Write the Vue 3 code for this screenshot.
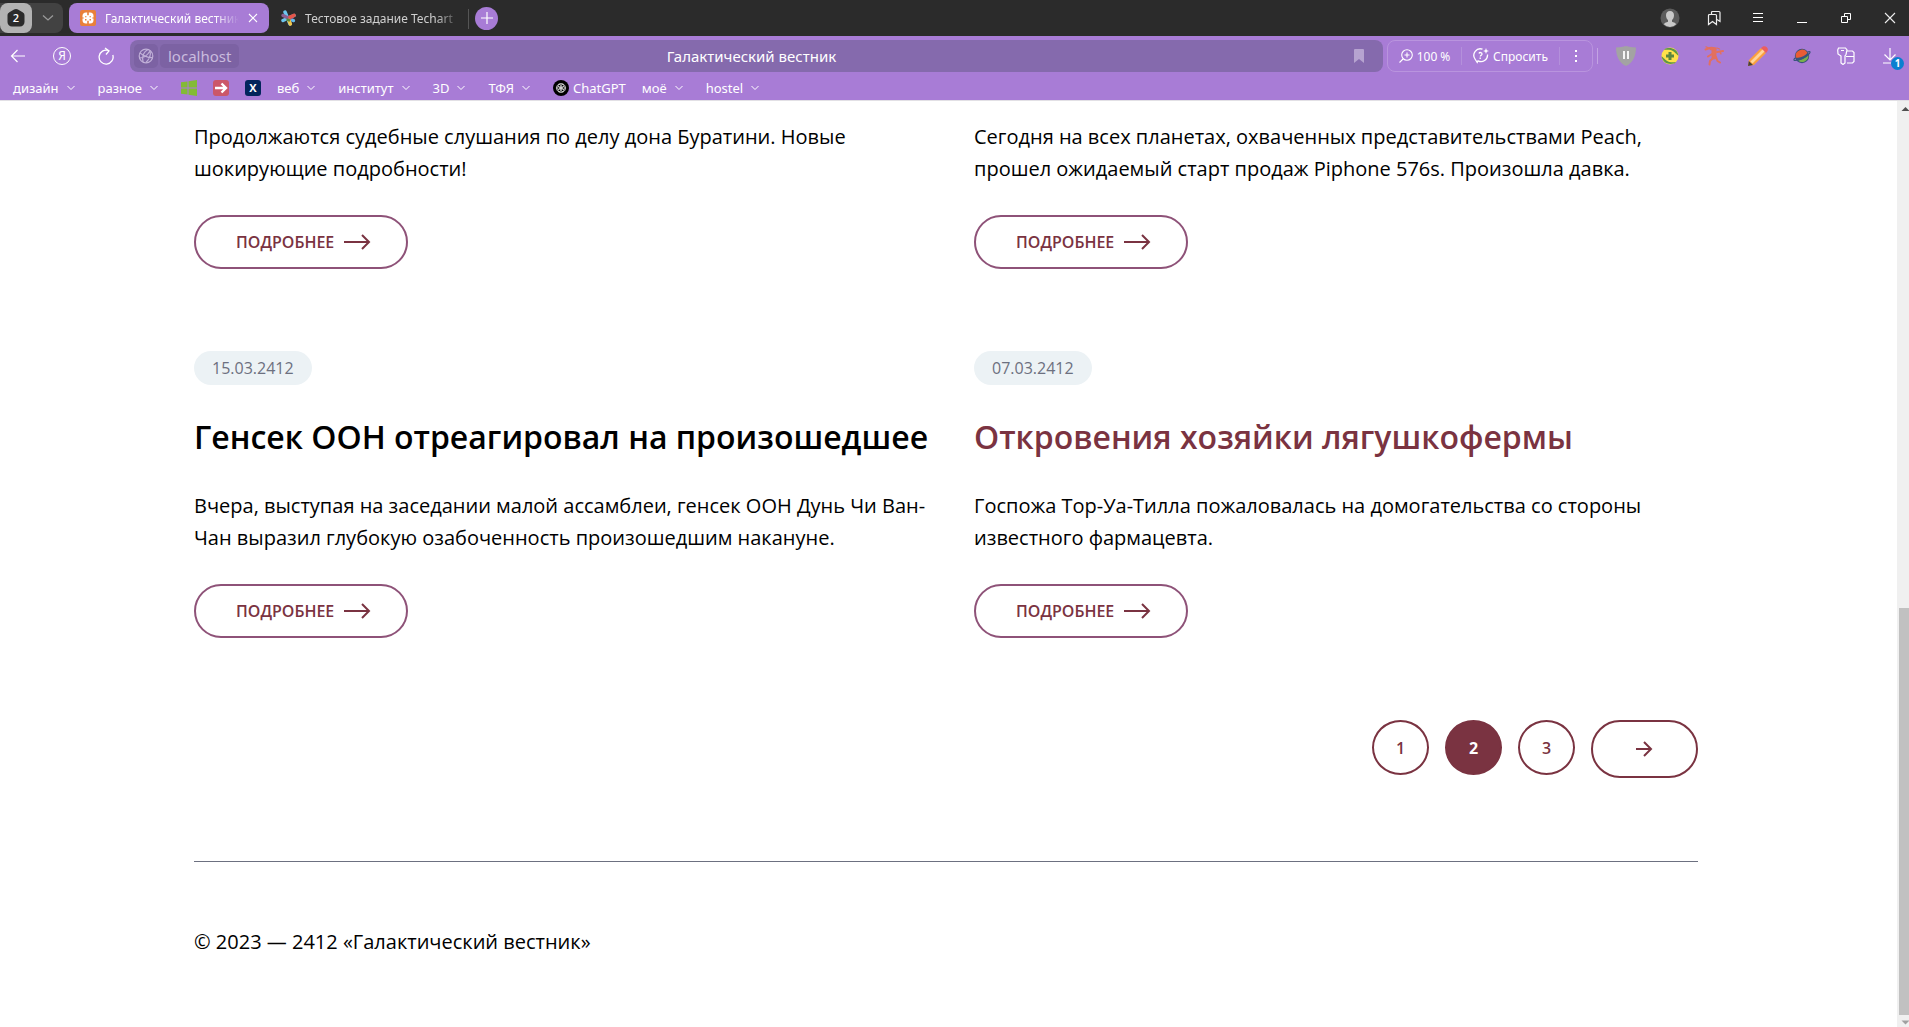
<script setup>
const bookmarks = [
  { label: 'дизайн', folder: true },
  { label: 'разное', folder: true },
  { icon: 'windows', name: 'Windows' },
  { icon: 'arrow', name: 'Переход' },
  { icon: 'x', name: 'X' },
  { label: 'веб', folder: true },
  { label: 'институт', folder: true },
  { label: '3D', folder: true },
  { label: 'ТФЯ', folder: true },
  { icon: 'gpt', label: 'ChatGPT' },
  { label: 'моё', folder: true },
  { label: 'hostel', folder: true },
]

const news = [
  { id: 1, text: 'Продолжаются судебные слушания по делу дона Буратини. Новые шокирующие подробности!' },
  { id: 2, text: 'Сегодня на всех планетах, охваченных представительствами Peach, прошел ожидаемый старт продаж Piphone 576s. Произошла давка.' },
  {
    id: 3,
    date: '15.03.2412',
    title: 'Генсек ООН отреагировал на произошедшее',
    text: 'Вчера, выступая на заседании малой ассамблеи, генсек ООН Дунь Чи Ван-Чан выразил глубокую озабоченность произошедшим накануне.',
  },
  {
    id: 4,
    date: '07.03.2412',
    title: 'Откровения хозяйки лягушкофермы',
    text: 'Госпожа Тор-Уа-Тилла пожаловалась на домогательства со стороны известного фармацевта.',
    active: true,
  },
]

const pages = [1, 2, 3]
const current = 2
</script>

<template>
  <div class="browser">
    <header class="chrome">
      <div class="tabbar">
        <div class="tab-group">
          <button class="tab-count" aria-label="Группа вкладок">
            <svg width="18" height="18" viewBox="0 0 18 18">
              <path d="M9 0c1 0 1.600.3 2.400.8l4.200 2.500C16.900 4.100 17.500 5 17.500 6.500V13a4.500 4.500 0 0 1-4.500 4.500H5A4.500 4.500 0 0 1 .5 13V6.500C.5 5 1.100 4.100 2.400 3.300L6.600.8C7.400.3 8 0 9 0z" fill="#2b2b2b" />
              <text x="9" y="13" text-anchor="middle" class="count-text">2</text>
            </svg>
          </button>
          <button class="tab-more" aria-label="Список вкладок">
            <svg width="12" height="8" viewBox="0 0 12 8"><path d="M1 1.500l5 4.500 5-4.500" fill="none" stroke="#999" stroke-width="1.300" /></svg>
          </button>
        </div>
        <div class="tab tab-active">
          <svg width="16" height="16" viewBox="0 0 16 16">
            <rect width="16" height="16" rx="2" fill="#e9803a" />
            <rect x="2.500" y="2.500" width="11" height="11" rx="3.500" fill="#fff" />
            <path d="M8 1.500v3.700M8 14.500v-3.700" stroke="#e9803a" stroke-width="1.600" />
            <path d="M5 6.300h1.500v.9H5zM9.500 6.300H11v.9H9.500zM5 9h1.500v1.600H5zM9.500 9H11v1.600H9.500z" fill="#e9803a" />
            <path d="M1.500 8h2.200M14.500 8h-2.200" stroke="#e9803a" stroke-width="1.200" />
          </svg>
          <span class="tab-title">Галактический вестник</span>
          <button class="tab-close" aria-label="Закрыть вкладку">
            <svg width="10" height="10" viewBox="0 0 10 10"><path d="M1 1l8 8M9 1l-8 8" stroke="#fff" stroke-width="1.100" /></svg>
          </button>
        </div>
        <div class="tab tab-idle">
          <svg width="16" height="16" viewBox="0 0 16 16">
            <path d="M5 2l5 12" stroke="#6cc5ef" stroke-width="3.500" stroke-linecap="round" />
            <path d="M14 5.500L3 10.500" stroke="#6cc5ef" stroke-width="3.500" stroke-linecap="round" />
            <path d="M3 5.500l10.500 5" stroke="#8a5f92" stroke-width="3.500" stroke-linecap="round" />
            <path d="M10 7.200l4-1.800" stroke="#e55549" stroke-width="3.500" stroke-linecap="round" />
            <path d="M9 10.500l1.300 3.500" stroke="#f2c64b" stroke-width="3.500" stroke-linecap="round" />
            <path d="M6.500 9.500l3.500 1" stroke="#59883f" stroke-width="2.500" />
            <path d="M12.500 10.300l1 .4" stroke="#5dbff0" stroke-width="3" stroke-linecap="round" />
          </svg>
          <span class="tab-title">Тестовое задание Techart</span>
        </div>
        <button class="tab-add" aria-label="Новая вкладка">
          <svg width="12" height="12" viewBox="0 0 12 12"><path d="M6 0v12M0 6h12" stroke="#fff" stroke-width="1.200" /></svg>
        </button>
        <div class="cells window-cells">
          <button aria-label="Профиль">
            <svg width="20" height="20" viewBox="0 0 20 20">
              <circle cx="10" cy="10" r="9.500" fill="#5c5c5c" />
              <path d="M10 3c2.600 0 4 1.700 4 4.200 0 2.200-.9 4-2 4.900v1.700c1.500.5 3.200 1 4.200 2.400A9 9 0 0 1 10 19a9 9 0 0 1-6.200-2.800C4.800 14.800 6.500 14.300 8 13.800v-1.700c-1.100-.9-2-2.700-2-4.900C6 4.700 7.400 3 10 3z" fill="#c9c9c9" />
            </svg>
          </button>
          <button aria-label="Закладки">
            <svg width="14" height="16" viewBox="0 0 14 16" fill="none" stroke="#eee" stroke-width="1.200">
              <path d="M1.500 5.500A1 1 0 0 1 2.500 4.500H8.500A1 1 0 0 1 9.500 5.500V14.500L5.500 11.500L1.500 14.500z" />
              <path d="M4.500 4V2.500A1 1 0 0 1 5.500 1.500H12A1 1 0 0 1 13 2.500V11.500L10 9.500" />
            </svg>
          </button>
          <button aria-label="Меню">
            <svg width="12" height="12" viewBox="0 0 12 12"><path d="M1 1.500h10M1 5.500h10M1 9.500h10" stroke="#fff" /></svg>
          </button>
          <button aria-label="Свернуть">
            <svg width="12" height="12" viewBox="0 0 12 12"><path d="M1 10.500h10" stroke="#fff" /></svg>
          </button>
          <button aria-label="Развернуть">
            <svg width="12" height="12" viewBox="0 0 12 12" fill="none" stroke="#fff"><path d="M1.500 4.500h6v6h-6zM4.500 4.500v-3h6v6h-3" /></svg>
          </button>
          <button aria-label="Закрыть">
            <svg width="12" height="12" viewBox="0 0 12 12"><path d="M1 1l10 10M11 1L1 11" stroke="#eee" stroke-width="1.100" /></svg>
          </button>
        </div>
      </div>

      <div class="toolbar">
        <div class="cells nav-cells">
          <button aria-label="Назад">
            <svg width="16" height="14" viewBox="0 0 16 14" fill="none" stroke="#fff" stroke-width="1.200"><path d="M15 7H1.500M7.500 1L1.500 7l6 6" /></svg>
          </button>
          <button aria-label="Яндекс"><span class="ya">Я</span></button>
          <button aria-label="Обновить">
            <svg width="16" height="18" viewBox="0 0 16 18" fill="none" stroke="#fff" stroke-width="1.300"><path d="M10.500 3.500A7 7 0 1 0 14.800 8M7 1l4 2.800L8 7.500" /></svg>
          </button>
        </div>
        <div class="address">
          <div class="address-left">
            <span class="site-chip">
              <svg width="16" height="16" viewBox="0 0 16 16" fill="none" stroke="#c1b0d8" stroke-width="1.200">
                <circle cx="8" cy="8" r="6.800" />
                <path d="M10 1.500C5 4 4 9 5 14M2 5c4 3 8 5 12.500 4.500M12 2.500c1 4-1 9-4 12M1.500 10C5 10 9 8 12 3" />
              </svg>
            </span>
            <span class="host-chip">localhost</span>
          </div>
          <span class="page-title">Галактический вестник</span>
          <button class="save" aria-label="Добавить в закладки">
            <svg width="10" height="14" viewBox="0 0 10 14"><path d="M0 1a1 1 0 0 1 1-1h8a1 1 0 0 1 1 1v13L5 10 0 14z" fill="#b6a3d0" /></svg>
          </button>
        </div>
        <div class="tools">
          <button class="tool-zoom">
            <svg width="14" height="14" viewBox="0 0 14 14" fill="none" stroke="#fff" stroke-width="1.100"><circle cx="8" cy="6" r="5.300" /><path d="M4 10L.5 13.500M8 3.500v5M5.500 6h5" /></svg>
            100 %
          </button>
          <button class="tool-ask">
            <svg width="16" height="16" viewBox="0 0 16 16" fill="none" stroke="#fff" stroke-width="1.300">
              <path d="M9.500 1.200A6.500 6.500 0 0 0 2 11L4.200 14.500 5 12.800A6.500 6.500 0 0 0 14.500 6.500" />
              <path d="M6 5.500C6.500 4 9.300 4.200 9 6.200 8.800 7.300 7.500 7.300 7.300 8.500M7.200 9.600v1.300" />
              <path d="M13 0l.8 2.200L16 3l-2.200.8L13 6l-.8-2.200L10 3l2.200-.8z" fill="#fff" stroke="none" />
            </svg>
            Спросить
          </button>
          <button class="tool-dots" aria-label="Ещё">
            <svg width="4" height="14" viewBox="0 0 4 14" fill="#fff"><path d="M1 1h2v2H1zM1 6h2v2H1zM1 11h2v2H1z" /></svg>
          </button>
        </div>
        <span class="split"></span>
        <div class="cells ext-cells">
          <button aria-label="Защита">
            <svg width="20" height="20" viewBox="0 0 20 20"><path d="M0 1.500C4 1.500 7 .5 10 0c3 .5 6 1.500 10 1.500C20 10 17 17 10 20 3 17 0 10 0 1.500z" fill="#a3a3a3" /><path d="M8 5v8M12 5v8" stroke="#fff" stroke-width="1.800" /></svg>
          </button>
          <button aria-label="Расширение">
            <svg width="20" height="20" viewBox="0 0 20 20">
              <circle cx="10" cy="10" r="8.500" fill="#ffe14a" />
              <path d="M4 3.500C9 .5 17 2 18.500 9.500 16.500 9 14.500 5 10.500 4 8 3.400 6 4 4 3.500z" fill="#5e9648" />
              <path d="M16 16.500C11 19.500 3 18 1.500 10.500 3.500 11 5.500 15 9.500 16c2.500.6 4.500 0 6.500.5z" fill="#5e9648" />
              <path d="M10 6v8M6 10h8" stroke="#5b8740" stroke-width="3" />
            </svg>
          </button>
          <button aria-label="Фигурка">
            <svg width="20" height="20" viewBox="0 0 20 20" fill="none" stroke="#e3705e" stroke-linecap="round" stroke-linejoin="round">
              <path d="M10 5v6" stroke-width="5" />
              <path d="M7 2.500l4 .5" stroke-width="3.500" />
              <path d="M6 2L1.500 3.500M13 6l3-.5 3-.5M8 8l-4 2.500M9 12l-3 3-.5 3.500M12 11l1.500 4 2.500 1.500" stroke-width="2" />
              <path d="M2 .8L5 2M16 5.500l1 2.500M13 2l2.500 1" stroke-width="1.300" />
            </svg>
          </button>
          <button aria-label="Карандаш">
            <svg width="20" height="20" viewBox="0 0 20 20"><path d="M0 20l1-6L13 2l5 5L6 19z" fill="#fa9f3e" /><path d="M2.500 15.500L15 3l2 2L4.500 17.500z" fill="#ffd49a" /><path d="M13 2l2-1.500c3-1 6 2 4.500 4.500L18 7z" fill="#ec5e60" /><path d="M0 20l.8-5L5 19z" fill="#45413c" /></svg>
          </button>
          <button aria-label="Планета">
            <svg width="18" height="16" viewBox="0 0 18 16">
              <circle cx="9" cy="8" r="7.200" fill="#37547b" />
              <path d="M2.800 9.500A6.400 6.400 0 0 1 14.500 4.800C12 8 7 10.500 2.800 9.500z" fill="#e85c35" />
              <path d="M5 12.500C9 12 13 9.500 15.400 7A6.400 6.400 0 0 1 5 12.500z" fill="#78b14a" />
              <path d="M14.500 4C17.500 3 18 4 15.500 6.500 12 10 6 12.500 2.500 12.500.5 12.500.5 11.500 2 10" fill="none" stroke="#37547b" stroke-width="1.200" />
            </svg>
          </button>
          <button aria-label="Пароли">
            <svg width="18" height="18" viewBox="0 0 18 18" fill="none" stroke="#fff" stroke-width="1.200"><path d="M1.500 1h7L10 3 9 7.500 8 9v7L6 17.500 4 16V9L1 7 .7 3zM4 3.500h3M10 4h5.500L17 5.500v9L15.500 16H10M9 9.500h8" /></svg>
          </button>
          <button class="download" aria-label="Загрузки">
            <svg width="14" height="16" viewBox="0 0 14 16" fill="none" stroke="#fff" stroke-width="1.200"><path d="M7 0v12M1.500 6.500L7 12l5.500-5.500M0 15h8" /></svg>
            <span class="badge">1</span>
          </button>
        </div>
      </div>

      <nav class="bookmarks" aria-label="Панель закладок">
        <a v-for="(b, i) in bookmarks" :key="i" href="#" :class="{ folder: b.folder }" :aria-label="b.name">
          <svg v-if="b.icon === 'windows'" width="16" height="16" viewBox="0 0 16 16"><path d="M0 2.200L6.500 1.400V7.500H0zM7.500 1.200L16 0V7.500H7.500zM0 8.500h6.500v6.100L0 13.800zM7.500 8.500H16V16l-8.500-1.200z" fill="#83bb35" /></svg>
          <svg v-else-if="b.icon === 'arrow'" width="16" height="16" viewBox="0 0 16 16"><rect width="16" height="16" rx="3" fill="#cb5769" /><path d="M2 8h10M8.500 3.500L13 8l-4.500 4.500" fill="none" stroke="#fff" stroke-width="2.400" /></svg>
          <svg v-else-if="b.icon === 'x'" width="16" height="16" viewBox="0 0 16 16"><rect width="16" height="16" rx="3" fill="#03255b" /><text x="8" y="12" text-anchor="middle" class="x-text">X</text></svg>
          <svg v-else-if="b.icon === 'gpt'" width="16" height="16" viewBox="0 0 16 16">
            <circle cx="8" cy="8" r="8" fill="#000" />
            <g fill="none" stroke="#ddd" stroke-width=".8">
              <ellipse v-for="a in [0, 60, 120, 180, 240, 300]" :key="a" cx="8" cy="5.500" rx="2.700" ry="2" :transform="`rotate(${a} 8 8)`" />
            </g>
          </svg>
          <span v-if="b.label">{{ b.label }}</span>
          <svg v-if="b.folder" class="chev" width="8" height="6" viewBox="0 0 8 6"><path d="M.5 1L4 4.500 7.500 1" fill="none" stroke="#fff" stroke-width="1" /></svg>
        </a>
      </nav>
    </header>

    <div class="viewport">
      <div class="page">
        <main>
          <section class="news">
            <article v-for="n in news" :key="n.id">
              <time v-if="n.date" class="date">{{ n.date }}</time>
              <h2 v-if="n.title" :class="{ accent: n.active }">{{ n.title }}</h2>
              <p>{{ n.text }}</p>
              <a href="#" class="more">
                Подробнее
                <svg width="28" height="16" viewBox="0 0 28 16" fill="none" stroke="#7a3341" stroke-width="2"><path d="M1 8h25M19 1l7 7-7 7" /></svg>
              </a>
            </article>
          </section>
          <nav class="pagination" aria-label="Страницы">
            <a v-for="p in pages" :key="p" href="#" class="page-link" :class="{ current: p === current }">{{ p }}</a>
            <a href="#" class="next" aria-label="Следующая страница">
              <svg width="18" height="16" viewBox="0 0 18 16" fill="none" stroke="#7a3341" stroke-width="2"><path d="M0 8h15M8 1l7 7-7 7" /></svg>
            </a>
          </nav>
        </main>
        <footer>© 2023 — 2412 «Галактический вестник»</footer>
      </div>
      <div class="scrollbar" aria-hidden="true">
        <svg class="up" width="18" height="17" viewBox="0 0 18 17"><path d="M8.500 6l4 4h-8z" fill="#505050" /></svg>
        <span class="track"></span>
        <span class="thumb"></span>
        <svg class="down" width="18" height="12" viewBox="0 0 18 12"><path d="M4.500 5.500h8l-4 4z" fill="#a0a0a0" /></svg>
      </div>
    </div>
  </div>
</template>

<style>
body {
  margin: 0;
}
</style>

<style scoped>
.browser {
  display: flex;
  flex-direction: column;
  min-height: 100vh;
  overflow: hidden;
  background: #fff;
  color: #000;
  font-family: 'Open Sans', 'Noto Sans', sans-serif;
}
button {
  display: flex;
  align-items: center;
  justify-content: center;
  padding: 0;
  border: 0;
  background: none;
  color: inherit;
  font: inherit;
}
a {
  color: inherit;
  text-decoration: none;
}
svg {
  flex: none;
}

/* Browser chrome */
.chrome {
  height: 100px;
  border-bottom: 1px solid #e2e0e5;
  background: #a87cd6;
  color: #fff;
  font-family: 'Noto Sans', 'Open Sans', sans-serif;
  font-size: 12px;
}
.tabbar {
  display: flex;
  align-items: center;
  height: 36px;
  background: #2b2b2b;
}
.tab-group {
  display: flex;
  width: 63px;
  height: 30px;
  margin-right: 6px;
  border-radius: 0 8px 8px 0;
  background: #424242;
}
.tab-count {
  width: 32px;
  border-radius: 8px;
  background: #b3b3b3;
}
.tab-more {
  flex: 1;
}
.count-text {
  fill: #fff;
  font: 600 11px 'Open Sans', sans-serif;
}
.tab {
  display: flex;
  align-items: center;
  gap: 9px;
  box-sizing: border-box;
  height: 30px;
  padding: 0 11px;
  border-radius: 8px;
}
.tab-active {
  width: 200px;
  background: #a87cd6;
}
.tab-idle {
  width: 199px;
  padding-right: 8px;
  color: #cfcfcf;
}
.tab-title {
  flex: 1;
  overflow: hidden;
  white-space: nowrap;
  mask-image: linear-gradient(to right, #000 calc(100% - 24px), transparent);
}
.tab-close {
  width: 10px;
}
.tab-add {
  position: relative;
  width: 23px;
  height: 23px;
  margin-left: 7px;
  border-radius: 50%;
  background: #a87cd6;
}
.tab-add::before {
  content: '';
  position: absolute;
  left: -7px;
  top: 2px;
  width: 1px;
  height: 20px;
  background: #555;
}
.cells {
  display: flex;
  height: 32px;
}
.cells button {
  width: 44px;
}
.window-cells {
  margin-left: auto;
  margin-right: -3px;
}
.toolbar {
  display: flex;
  align-items: center;
  height: 40px;
}
.nav-cells {
  margin: 0 2px 0 -4px;
}
.ya {
  width: 16px;
  height: 16px;
  border: 1px solid #fff;
  border-radius: 50%;
  line-height: 16px;
  text-align: center;
}
.address {
  flex: 1;
  display: grid;
  grid-template-columns: 1fr auto 1fr;
  align-items: center;
  height: 32px;
  padding: 0 14px 0 4px;
  border-radius: 8px;
  background: #856aad;
  font-size: 15px;
}
.address-left {
  display: flex;
  gap: 2px;
  color: #cabbde;
}
.site-chip,
.host-chip {
  display: flex;
  align-items: center;
  height: 24px;
  border-radius: 5px;
  background: #7c62a3;
}
.site-chip {
  width: 24px;
  justify-content: center;
}
.host-chip {
  padding: 0 8px;
}
.save {
  justify-self: end;
  padding: 0 5px;
}
.tools {
  display: flex;
  align-items: center;
  box-sizing: border-box;
  height: 32px;
  margin-left: 4px;
  border: 1px solid #b994de;
  border-radius: 8px;
}
.tools button {
  height: 18px;
  gap: 4px;
  white-space: nowrap;
}
.tool-zoom {
  width: 73px;
}
.tools .tool-ask {
  width: 99px;
  border: solid #b490db;
  border-width: 0 1px;
}
.tool-dots {
  width: 32px;
}
.split {
  width: 1px;
  height: 16px;
  margin: 0 6px 0 4px;
  background: #c3a3e3;
}
.ext-cells {
  margin-right: -3px;
}
.download {
  position: relative;
}
.badge {
  position: absolute;
  left: 23px;
  top: 17px;
  width: 13px;
  height: 13px;
  border-radius: 50%;
  background: #0a7fd0;
  font-size: 10px;
  font-weight: 700;
  line-height: 13px;
  text-align: center;
}
.bookmarks {
  display: flex;
  align-items: center;
  height: 24px;
  padding-left: 5px;
  font-size: 13px;
}
.bookmarks a {
  display: flex;
  align-items: center;
  gap: 4px;
  height: 24px;
  padding: 0 8px;
}
.bookmarks .folder {
  gap: 8px;
  padding-right: 15px;
}
.x-text {
  fill: #fff;
  font: 700 11px 'Open Sans', sans-serif;
}

/* Page */
.viewport {
  flex: 1;
  display: flex;
}
.page {
  flex: 1;
  padding: 20px 199px 0 194px;
  font-size: 20px;
  line-height: 32px;
}
.news {
  display: grid;
  grid-template-columns: 1fr 1fr;
  gap: 82px 40px;
  margin-right: -16px;
}
article {
  display: flex;
  flex-direction: column;
  align-items: flex-start;
}
.date {
  padding: 0 18px;
  border-radius: 17px;
  background: #ecf2f5;
  color: #6c7080;
  font-size: 16px;
  line-height: 34px;
}
h2 {
  margin: 29px 0 31px;
  font-size: 32px;
  font-weight: 600;
  line-height: 45px;
}
.accent {
  color: #7a3341;
}
p {
  margin: 0 0 30px;
}
.more {
  display: flex;
  align-items: center;
  gap: 9px;
  box-sizing: border-box;
  width: 214px;
  height: 54px;
  padding-left: 40px;
  border: 2px solid #8e5278;
  border-radius: 27px;
  color: #7a3341;
  font-size: 16px;
  font-weight: 600;
  text-transform: uppercase;
}
.pagination {
  display: flex;
  align-items: flex-start;
  justify-content: flex-end;
  gap: 16px;
  margin-top: 82px;
}
.pagination a {
  display: flex;
  align-items: center;
  justify-content: center;
  box-sizing: border-box;
  border: 2px solid #7a3341;
  color: #7a3341;
  font-size: 16px;
  font-weight: 600;
}
.page-link {
  width: 57px;
  height: 55px;
  border-radius: 50%;
}
.pagination .current {
  background: #7a3341;
  color: #fff;
  font-weight: 700;
}
.next {
  width: 107px;
  height: 58px;
  border-radius: 29px;
}
footer {
  margin-top: 83px;
  padding: 64px 0;
  border-top: 1px solid #6c7080;
}
.scrollbar {
  display: flex;
  flex-direction: column;
  width: 12px;
  overflow: hidden;
  background: #f0f0f0;
}
.track {
  flex: 490;
}
.thumb {
  flex: 407;
  margin-left: 2px;
  background: #c1c1c1;
}
</style>
